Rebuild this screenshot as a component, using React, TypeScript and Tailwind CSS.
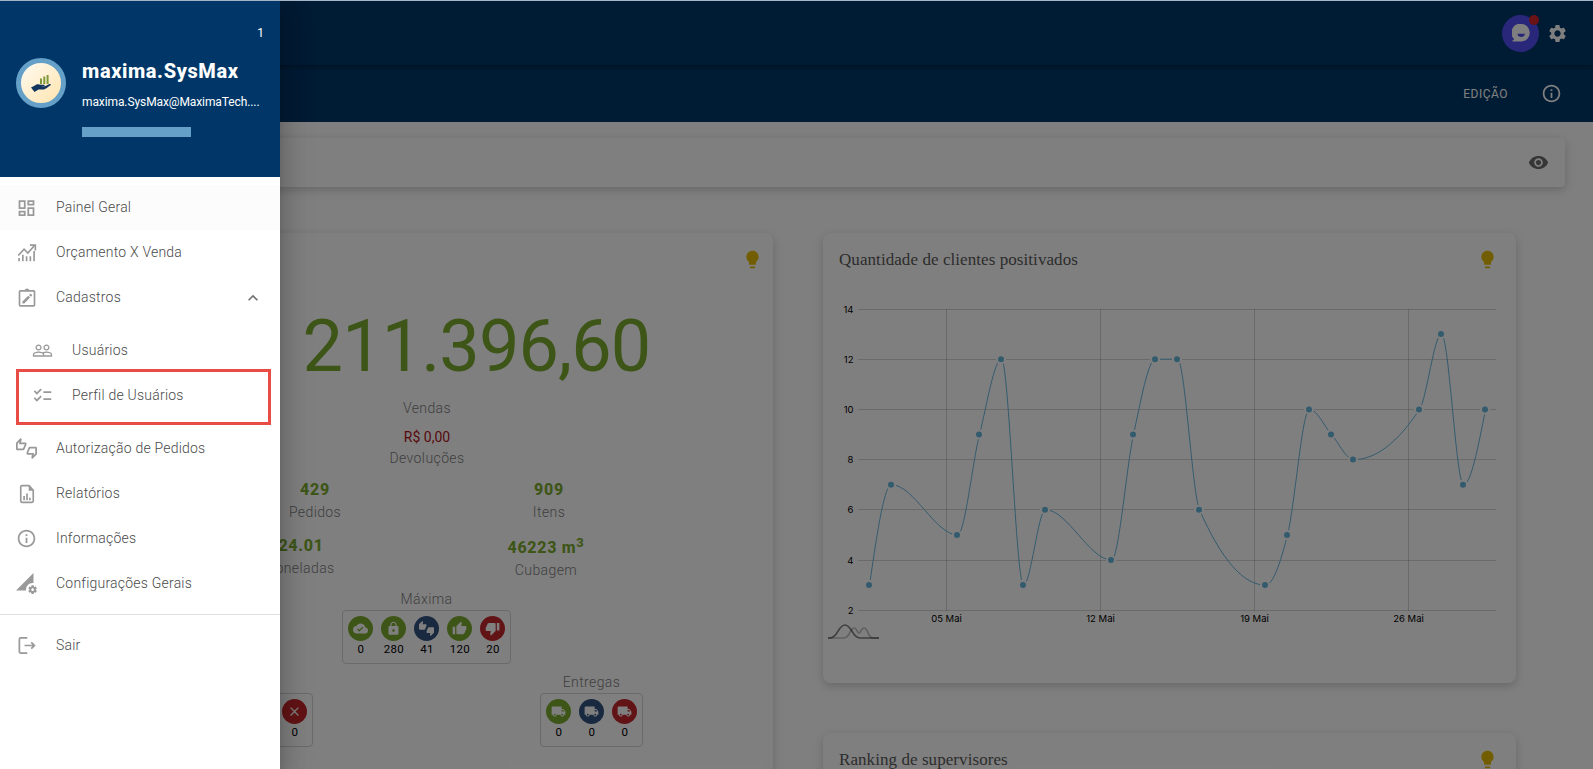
import type { ReactNode } from 'react'
import {
  MdChecklist,
  MdClose,
  MdCloudDone,
  MdExpandLess,
  MdInfoOutline,
  MdLightbulb,
  MdLocalShipping,
  MdLock,
  MdOutlineDashboard,
  MdOutlineThumbsUpDown,
  MdPeopleOutline,
  MdPermDataSetting,
  MdRemoveRedEye,
  MdSettings,
  MdThumbDown,
  MdThumbUp,
  MdThumbsUpDown,
} from 'react-icons/md'

interface Point {
  day: number
  value: number
}

const points: Point[] = [
  { day: 1, value: 3 },
  { day: 2, value: 7 },
  { day: 5, value: 5 },
  { day: 6, value: 9 },
  { day: 7, value: 12 },
  { day: 8, value: 3 },
  { day: 9, value: 6 },
  { day: 12, value: 4 },
  { day: 13, value: 9 },
  { day: 14, value: 12 },
  { day: 15, value: 12 },
  { day: 16, value: 6 },
  { day: 19, value: 3 },
  { day: 20, value: 5 },
  { day: 21, value: 10 },
  { day: 22, value: 9 },
  { day: 23, value: 8 },
  { day: 26, value: 10 },
  { day: 27, value: 13 },
  { day: 28, value: 7 },
  { day: 29, value: 10 },
]

const xOf = (day: number) => 46.5 + (day - 1) * 22
const yOf = (value: number) => 16 + (14 - value) * 25.1

// Monotone cubic interpolation, so the line never overshoots a point
function monotonePath(data: Point[]) {
  const p = data.map((d) => [xOf(d.day), yOf(d.value)])
  const n = p.length
  const slope = (i: number) => (p[i + 1][1] - p[i][1]) / (p[i + 1][0] - p[i][0])
  const t: number[] = new Array(n).fill(0)

  for (let i = 1; i < n - 1; i++) {
    const h0 = p[i][0] - p[i - 1][0]
    const h1 = p[i + 1][0] - p[i][0]
    const s0 = slope(i - 1)
    const s1 = slope(i)
    const mid = (s0 * h1 + s1 * h0) / (h0 + h1)
    t[i] = (Math.sign(s0) + Math.sign(s1)) * Math.min(Math.abs(s0), Math.abs(s1), 0.5 * Math.abs(mid))
  }
  t[0] = (3 * slope(0) - t[1]) / 2
  t[n - 1] = (3 * slope(n - 2) - t[n - 2]) / 2

  let path = `M${p[0][0]},${p[0][1]}`
  for (let i = 0; i < n - 1; i++) {
    const dx = (p[i + 1][0] - p[i][0]) / 3
    path += `C${p[i][0] + dx},${p[i][1] + dx * t[i]},${p[i + 1][0] - dx},${p[i + 1][1] - dx * t[i + 1]},${p[i + 1][0]},${p[i + 1][1]}`
  }
  return path
}

function ChartIcon() {
  return (
    <svg viewBox="0 0 24 24" className="w-5 h-5" fill="none" stroke="currentColor" strokeWidth="2">
      <path d="M2.500 22v-4M7 22v-8M11.500 22v-6M16 22v-6M20.500 22V9.500" />
      <path d="M1.500 15 8.500 7.500l4.500 4.500 8-9" />
      <path d="M15.500 2.500h6.500V9" />
    </svg>
  )
}

function ClipboardIcon() {
  return (
    <svg viewBox="0 0 24 24" className="w-5 h-5" fill="currentColor">
      <path d="M20 2.500h-5.200a3 3 0 0 0-5.600 0H4a2 2 0 0 0-2 2v16a2 2 0 0 0 2 2h16a2 2 0 0 0 2-2v-16a2 2 0 0 0-2-2zm0 18H4v-16h16v16z" />
      <path d="m6.500 16.300 7-7 2.200 2.200-7 7H6.500zM18 9.200l-1.300 1.300-2.200-2.200 1.300-1.300c.2-.2.6-.2.8 0L18 8.400c.2.200.2.600 0 .8z" />
    </svg>
  )
}

function ReportIcon() {
  return (
    <svg viewBox="0 0 24 24" className="w-5 h-5" fill="none" stroke="currentColor" strokeWidth="2">
      <path d="M14.500 2H6a1.500 1.500 0 0 0-1.500 1.500v17A1.500 1.500 0 0 0 6 22h12a1.500 1.500 0 0 0 1.500-1.500V7.500z" />
      <path d="M14 1.500v6.500h6z" fill="currentColor" stroke="none" />
      <path d="M8.500 19.500v-5M12 19.500v-8M15.500 19.500v-3" />
    </svg>
  )
}

function ExitIcon() {
  return (
    <svg viewBox="0 0 24 24" className="w-[19px] h-[19px]" fill="none" stroke="currentColor" strokeWidth="2.2">
      <path d="M13 2.500H4.500A1.500 1.500 0 0 0 3 4v16a1.500 1.500 0 0 0 1.500 1.500H13" />
      <path d="M9.500 12H22M18 8l4 4-4 4" />
    </svg>
  )
}

function HandChartLogo() {
  return (
    <svg viewBox="0 0 22 20" className="w-[22px] h-[20px]">
      <path d="M10 5.500h2V11h-2zM13.300 3.500h2V11h-2zM16.600 2h2v9h-2z" fill="#7f9a3c" />
      <path
        d="M1 14.500 4 13l2.500-1.500c1.500-.6 3 0 4.500.3h3c1 .2.800 1.300 0 1.400h-2.500c2 .5 3.500 0 5-.8l3-1.400c1-.3 1.800.5 1 1.300l-4.500 3.200c-1.500 1-2.500 1-4 1H8.500L4.500 19z"
        fill="#12355f"
      />
    </svg>
  )
}

interface MenuItemProps {
  icon: ReactNode
  label: string
  active?: boolean
  nested?: boolean
  children?: ReactNode
}

function MenuItem({ icon, label, active, nested, children }: MenuItemProps) {
  return (
    <div
      className={`flex items-center h-[45px] pr-[17px] ${nested ? 'pl-8' : 'pl-4'} ${active ? 'bg-[#fcfcfc]' : ''}`}
    >
      <span className="w-[21px] mr-[19px] flex justify-center text-[#999999]">{icon}</span>
      <span className="flex-1 text-[14px] font-light tracking-[0.22px] text-[#4a4a4a]">{label}</span>
      {children}
    </div>
  )
}

function Drawer() {
  return (
    <aside className="absolute left-0 top-0 w-[280px] h-[769px] bg-white shadow-[0_8px_10px_-5px_rgba(0,0,0,0.2),0_16px_24px_2px_rgba(0,0,0,0.14),0_6px_30px_5px_rgba(0,0,0,0.12)]">
      <div className="h-[177px] bg-[#003768] text-white pt-[23px] pl-4 pr-4">
        <div className="text-right text-[12px] leading-5">1</div>
        <div className="flex mt-[15px]">
          <div className="w-[50px] h-[50px] rounded-full border-[5px] border-[#64a0c8] bg-gradient-to-br from-[#fffaf0] to-[#ffe4ae] flex items-center justify-center">
            <HandChartLogo />
          </div>
          <div className="ml-4 pt-px">
            <div className="text-[20px] leading-6 font-extrabold tracking-[0.6px]">maxima.SysMax</div>
            <div className="text-[12px] leading-5 mt-[9px] tracking-[-0.1px] whitespace-nowrap">
              maxima.SysMax@MaximaTech....
            </div>
            <div className="w-[109px] h-[10px] mt-[15px] bg-[#64a0c8]" />
          </div>
        </div>
      </div>

      <nav className="pt-2">
        <MenuItem active icon={<MdOutlineDashboard size={22} />} label="Painel Geral" />
        <MenuItem icon={<ChartIcon />} label="Orçamento X Venda" />
        <MenuItem icon={<ClipboardIcon />} label="Cadastros">
          <MdExpandLess size={20} className="text-[#707070]" />
        </MenuItem>
        <div className="py-2">
          <MenuItem nested icon={<MdPeopleOutline size={21} />} label="Usuários" />
          <div className="relative">
            <MenuItem nested icon={<MdChecklist size={21} />} label="Perfil de Usuários" />
            <div className="absolute left-4 -top-1 w-[255px] h-[56px] border-[3px] border-[#e94b45]" />
          </div>
        </div>
        <MenuItem icon={<MdOutlineThumbsUpDown size={21} />} label="Autorização de Pedidos" />
        <MenuItem icon={<ReportIcon />} label="Relatórios" />
        <MenuItem icon={<MdInfoOutline size={21} />} label="Informações" />
        <MenuItem icon={<MdPermDataSetting size={21} />} label="Configurações Gerais" />
        <div className="border-t border-[#dfdfdf] mt-2 pt-2">
          <MenuItem icon={<ExitIcon />} label="Sair" />
        </div>
      </nav>
    </aside>
  )
}

function StatusCircle({ color, icon, value }: { color: string; icon: ReactNode; value: string }) {
  return (
    <div className="w-[33px] flex flex-col items-center">
      <div className={`w-[25px] h-[25px] rounded-full flex items-center justify-center text-white ${color}`}>
        {icon}
      </div>
      <div className="text-[11.5px] leading-4 tracking-[0.3px] pl-px text-black">{value}</div>
    </div>
  )
}

function Stat({ value, label }: { value: ReactNode; label: string }) {
  return (
    <div className="w-[120px] text-center">
      <div className="text-[16px] leading-5 font-extrabold tracking-[0.7px] text-[#7cab31]">{value}</div>
      <div className="text-[14px] leading-5 mt-[2px] font-light tracking-[0.4px] text-[#808080]">{label}</div>
    </div>
  )
}

const green = 'bg-[#7cab31]'
const blue = 'bg-[#325580]'
const red = 'bg-[#c5272b]'

function SalesCard() {
  return (
    <section className="w-[692px] h-[560px] rounded-lg bg-white shadow-[0_3px_10px_rgba(0,0,0,0.18)]">
      <div className="flex justify-end h-[78px] pt-4 pr-[10px]">
        <MdLightbulb size={21} className="text-[#e4bb00]" />
      </div>
      <div className="text-center pl-[99px] text-[72px] leading-[72px] tracking-[-0.9px] whitespace-nowrap text-[#7cab31]">
        211.396,60
      </div>
      <div className="text-center text-[14px] leading-5 mt-[15px] font-light tracking-[0.4px] text-[#808080]">Vendas</div>
      <div className="text-center text-[14px] leading-5 mt-[9px] text-[#b01218]">R$ 0,00</div>
      <div className="text-center text-[14px] leading-5 mt-px font-light tracking-[0.4px] text-[#808080]">Devoluções</div>

      <div className="flex mt-[12px] pl-[174px] gap-[114px]">
        <Stat value="429" label="Pedidos" />
        <Stat value="909" label="Itens" />
      </div>
      <div className="flex mt-[14px] pl-[160px] gap-[125px]">
        <Stat value="24.01" label="Toneladas" />
        <div className="pt-[2px]">
          <Stat
            value={
              <>
                46223 m<sup className="text-[13px] leading-none">3</sup>
              </>
            }
            label="Cubagem"
          />
        </div>
      </div>

      <div className="flex flex-col items-center mt-[9px] pr-px">
        <div className="text-[14px] leading-5 font-light tracking-[0.4px] text-[#808080]">Máxima</div>
        <div className="flex mt-px h-[54px] px-px pt-[5px] rounded border border-[#d4d4d4]">
          <StatusCircle color={green} icon={<MdCloudDone size={15} />} value="0" />
          <StatusCircle color={green} icon={<MdLock size={15} />} value="280" />
          <StatusCircle color={blue} icon={<MdThumbsUpDown size={15} />} value="41" />
          <StatusCircle color={green} icon={<MdThumbUp size={15} />} value="120" />
          <StatusCircle color={red} icon={<MdThumbDown size={15} />} value="20" />
        </div>
      </div>

      <div className="flex items-end mt-2 pl-[96px]">
        <div className="flex justify-end w-[136px] h-[54px] px-px pt-[5px] rounded border border-[#d4d4d4]">
          <StatusCircle color={red} icon={<MdClose size={15} />} value="0" />
        </div>
        <div className="flex flex-col items-center ml-[227px]">
          <div className="text-[14px] leading-5 font-light tracking-[0.4px] text-[#808080]">Entregas</div>
          <div className="flex mt-px h-[54px] px-px pt-[5px] rounded border border-[#d4d4d4]">
            <StatusCircle color={green} icon={<MdLocalShipping size={15} />} value="0" />
            <StatusCircle color={blue} icon={<MdLocalShipping size={15} />} value="0" />
            <StatusCircle color={red} icon={<MdLocalShipping size={15} />} value="0" />
          </div>
        </div>
      </div>
    </section>
  )
}

function CardHeader({ title }: { title: string }) {
  return (
    <div className="flex justify-between pt-4 pl-4 pr-[18px]">
      <h2 className="font-['Liberation_Serif',serif] text-[17px] leading-[22px] tracking-[0.07px] text-[#5a5a5a]">
        {title}
      </h2>
      <MdLightbulb size={21} className="text-[#e4bb00]" />
    </div>
  )
}

function ClientsCard() {
  return (
    <section className="w-[693px] h-[450px] rounded-lg bg-white shadow-[0_3px_10px_rgba(0,0,0,0.18)]">
      <CardHeader title="Quantidade de clientes positivados" />
      {/* Chart area, one unit per pixel */}
      <svg width="693" height="350" viewBox="0 0 693 350" className="mt-[22px] font-[Inter,sans-serif] text-[9.5px]">
        <g stroke="#000" strokeOpacity="0.17">
          {[14, 12, 10, 8, 6, 4, 2].map((v) => (
            <line key={v} x1="35" x2="673" y1={Math.floor(yOf(v)) + 0.5} y2={Math.floor(yOf(v)) + 0.5} />
          ))}
          {[5, 12, 19, 26].map((d) => (
            <line key={d} x1={xOf(d) - 11} x2={xOf(d) - 11} y1="16" y2="318" />
          ))}
        </g>
        {[14, 12, 10, 8, 6, 4, 2].map((v) => (
          <text key={v} x="30.500" y={yOf(v) + 3.5} textAnchor="end">
            {v}
          </text>
        ))}
        {['05 Mai', '12 Mai', '19 Mai', '26 Mai'].map((label, i) => (
          <text key={label} x={123.5 + i * 154} y="329" textAnchor="middle">
            {label}
          </text>
        ))}
        <path d={monotonePath(points)} fill="none" stroke="#67b7dc" strokeWidth="1" />
        {points.map((p) => (
          <circle key={p.day} cx={xOf(p.day) - 0.5} cy={yOf(p.value)} r="4" fill="#67b7dc" stroke="#fff" strokeWidth="2" />
        ))}
        <g fill="none" strokeWidth="1.7">
          <path
            d="M5 345h16c6 0 6-10 10-10 3 0 3 5 5 5s2-5 5-5c4 0 4 10 9 10h6"
            stroke="#000"
            strokeOpacity="0.25"
          />
          <path d="M5 345h2c8 0 8-13 15-13s7 13 15 13h19" stroke="#000" strokeOpacity="0.5" />
        </g>
      </svg>
    </section>
  )
}

function ChatButton() {
  return (
    <div className="relative w-[37px] h-[37px] rounded-full bg-[#504ff5] flex items-center justify-center">
      <svg viewBox="0 0 18 18" className="w-[18px] h-[18px]">
        <path d="M9.200 0a8.600 8.800 0 1 1 0 17.600H.800c-.8 0-.8-1 0-1.200l1.400-1.200A8.600 8.800 0 0 1 9.200 0z" fill="#fff" />
        <path d="M5.500 9.800h7.400c0 4.300-7.400 4.300-7.400 0z" fill="#504ff5" />
      </svg>
      <span className="absolute right-0 top-0 w-[10px] h-[10px] rounded-full bg-[#d5242c]" />
    </div>
  )
}

export default function App() {
  return (
    <div className="relative w-[1593px] h-[769px] overflow-hidden bg-[#fefefe] font-[Roboto,sans-serif]">
      <header className="relative h-[65px] bg-[#003768] pt-px shadow-[0_2px_5px_rgba(0,0,0,0.35)] flex items-center justify-end gap-[8px] pr-[25px] text-white">
        <ChatButton />
        <MdSettings size={21} />
      </header>
      <div className="h-[57px] bg-[#003768] flex items-center justify-end gap-[33px] pr-[31px] text-white">
        <span className="text-[12px] tracking-[0.5px]">EDIÇÃO</span>
        <MdInfoOutline size={21} />
      </div>

      <main className="pt-4">
        <div className="ml-[60px] w-[1505px] h-[49px] rounded bg-white shadow-[0_3px_10px_rgba(0,0,0,0.18)] flex items-center justify-end pr-4 text-[#6c6c6c]">
          <MdRemoveRedEye size={21} />
        </div>
        <div className="flex gap-[50px] mt-[46px] ml-[81px]">
          <SalesCard />
          <div className="flex flex-col gap-[50px]">
            <ClientsCard />
            <section className="h-[300px] rounded-lg bg-white shadow-[0_3px_10px_rgba(0,0,0,0.18)]">
              <CardHeader title="Ranking de supervisores" />
            </section>
          </div>
        </div>
      </main>

      <div className="absolute inset-0 bg-black/50" />
      <Drawer />
      <div className="absolute inset-x-0 top-0 h-px bg-[#a3b5c7]" />
    </div>
  )
}
